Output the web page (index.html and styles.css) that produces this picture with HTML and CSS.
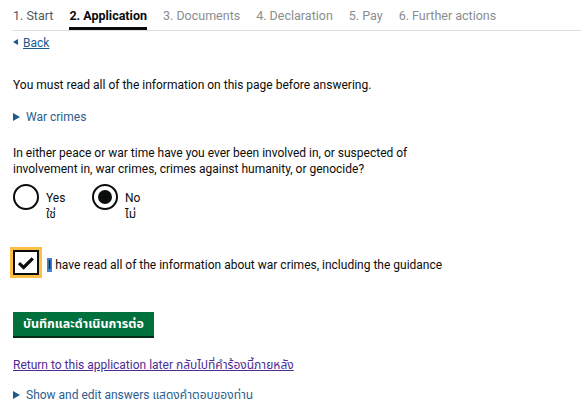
FILE: index.html
```html
<!DOCTYPE html>
<html lang="en">
<head>
<meta charset="utf-8">
<title>Application</title>
<link rel="stylesheet" href="styles.css">
</head>
<body>
<nav class="steps">
  <span class="step">1. Start</span>
  <span class="step current">2. Application</span>
  <span class="step todo">3. Documents</span>
  <span class="step todo">4. Declaration</span>
  <span class="step todo">5. Pay</span>
  <span class="step todo">6. Further actions</span>
</nav>
<main class="main">
  <a class="back" href="#"><span class="back-arrow"></span>Back</a>
  <p class="intro">You must read all of the information on this page before answering.</p>
  <div class="details"><span class="tri"></span>War crimes</div>
  <p class="question">In either peace or war time have you ever been involved in, or suspected of involvement in, war crimes, crimes against humanity, or genocide?</p>
  <div class="radios">
    <label class="radio"><span class="circle"></span><span class="rlabel">Yes<br>ใช่</span></label>
    <label class="radio"><span class="circle checked"></span><span class="rlabel">No<br>ไม่</span></label>
  </div>
  <div class="checkrow">
    <span class="focus"><span class="box"><svg width="18" height="14" viewBox="0 0 18 14"><path d="M2 7.2 L6.6 11.5 L15.8 2.4" fill="none" stroke="#0b0c0c" stroke-width="3.2"/></svg></span></span>
    <span class="ctext"><span class="sel">I</span> have read all of the information about war crimes, including the guidance</span>
  </div>
  <button class="button">บันทึกและดำเนินการต่อ</button>
  <a class="later" href="#">Return to this application later กลับไปที่คำร้องนี้ภายหลัง</a>
  <div class="details answers"><span class="tri"></span>Show and edit answers แสดงคำตอบของท่าน</div>
</main>
</body>
</html>
```
FILE: styles.css
```css
html, body {
  margin: 0;
  padding: 0;
  background: #fff;
}
body {
  font-family: Roboto, "Noto Sans Thai", "Noto Sans", sans-serif;
  font-size: 12px;
  color: #0b0c0c;
}
.steps {
  display: flex;
  gap: 16px;
  margin-left: 12px;
  padding: 7px 0 0 1px;
  height: 23px;
  border-bottom: 1px solid #dee0e2;
  font-size: 12.5px;
}
.step {
  color: #505a5f;
  line-height: 18px;
}
.step.todo {
  color: #8a8d8f;
}
.step.current {
  color: #0b0c0c;
  font-weight: 700;
  border-bottom: 3px solid #0b0c0c;
  height: 20px;
}
.main {
  padding: 0 13px;
  display: flex;
  flex-direction: column;
  align-items: flex-start;
}
.back {
  margin-top: 4px;
  color: #1d5a8e;
  text-decoration: underline;
  display: flex;
  align-items: center;
  line-height: 16px;
}
.back-arrow {
  width: 0;
  height: 0;
  border-top: 3px solid transparent;
  border-bottom: 3px solid transparent;
  border-right: 5px solid #1d5a8e;
  margin-right: 5px;
  margin-top: -2px;
}
.intro {
  margin: 26px 0 0;
  line-height: 16px;
}
.details {
  margin-top: 16px;
  color: #2b5d8e;
  display: flex;
  align-items: center;
  line-height: 16px;
}
.tri {
  width: 0;
  height: 0;
  border-top: 4px solid transparent;
  border-bottom: 4px solid transparent;
  border-left: 7px solid #1d5a8e;
  margin-right: 6px;
}
.question {
  margin: 20px 0 0;
  line-height: 16px;
  max-width: 430px;
}
.radios {
  display: flex;
  margin-top: 5px;
}
.radio {
  display: flex;
  align-items: flex-start;
  gap: 7px;
  width: 79px;
}
.circle {
  width: 22px;
  height: 22px;
  border: 2px solid #0b0c0c;
  border-radius: 50%;
  display: flex;
  align-items: center;
  justify-content: center;
  margin-top: 2px;
}
.circle.checked::after {
  content: "";
  width: 14px;
  height: 14px;
  border-radius: 50%;
  background: #0b0c0c;
}
.rlabel {
  line-height: 16px;
  padding-top: 8px;
}
.checkrow {
  display: flex;
  align-items: center;
  margin-top: 25px;
  margin-left: -3px;
  gap: 5px;
}
.focus {
  background: #ffbf47;
  padding: 3px;
  display: flex;
}
.box {
  width: 22px;
  height: 21px;
  border: 2px solid #0b0c0c;
  background: #fff;
  display: flex;
  align-items: center;
  justify-content: center;
}
.ctext {
  line-height: 16px;
  padding-top: 4px;
}
.sel {
  background: #3f83d1;
  color: #0b0c0c;
  padding: 0 1px;
}
.button {
  margin-top: 34px;
  background: #00703c;
  color: #fff;
  border: 0;
  box-shadow: 0 2px 0 #002d18;
  font-family: inherit;
  font-size: 12.5px;
  font-weight: 700;
  padding: 4px 10px 4px;
  line-height: 16px;
  cursor: pointer;
}
.later {
  margin-top: 21px;
  color: #4c2c92;
  text-decoration: underline;
  line-height: 16px;
}
.answers {
  margin-top: 14px;
}
```
